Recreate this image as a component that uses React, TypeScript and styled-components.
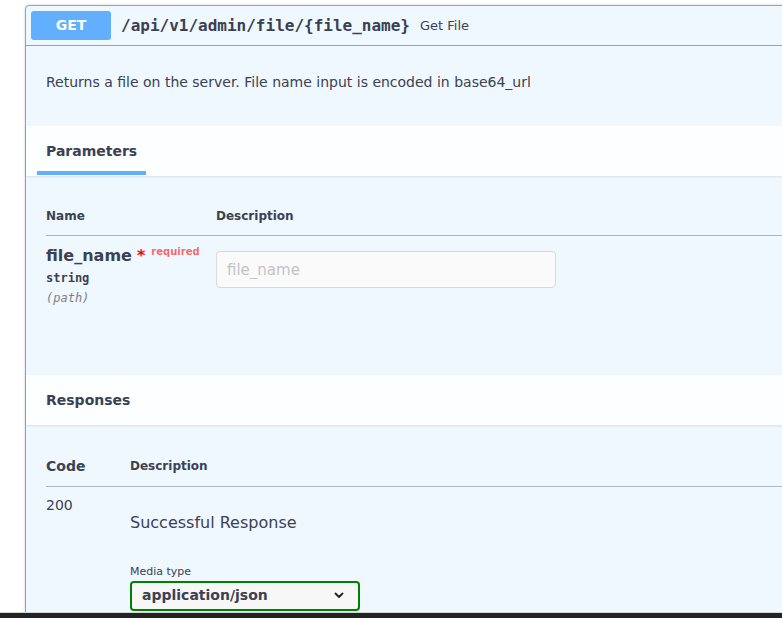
import React from "react";
import styled, { createGlobalStyle } from "styled-components";

const Global = createGlobalStyle`
  html, body { margin: 0; padding: 0; background: #fff; }
  body { font-family: "DejaVu Sans", "Liberation Sans", sans-serif; color: #3b4151; }
  * { box-sizing: border-box; }
`;

const Page = styled.div`
  width: 782px;
  height: 618px;
  overflow: hidden;
  display: flex;
  flex-direction: column;
`;

const Viewport = styled.div`
  flex: 1;
  overflow: hidden;
  padding: 5px 0 0 25px;
`;

const BottomBar = styled.div`
  height: 6px;
  flex: none;
  border-top: 1px solid #d6d6d6;
  background: #232323;
`;

const Card = styled.div`
  width: 820px;
  border: 1px solid #61affe;
  border-radius: 4px;
  background: #eff7ff;
  box-shadow: 0 0 3px rgba(0, 0, 0, 0.19);
`;

const Summary = styled.div`
  display: flex;
  align-items: center;
  padding: 5px;
  border-bottom: 1px solid #61affe;
`;

const Method = styled.span`
  min-width: 80px;
  padding: 6px 0;
  text-align: center;
  background: #61affe;
  color: #fff;
  border-radius: 3px;
  font-size: 14px;
  line-height: 17px;
  font-weight: 700;
  font-family: "DejaVu Sans", sans-serif;
`;

const Path = styled.span`
  padding: 0 10px;
  font-family: "DejaVu Sans Mono", monospace;
  font-weight: 700;
  font-size: 16px;
  color: #3b4151;
`;

const SummaryDesc = styled.span`
  font-size: 13px;
  color: #3b4151;
`;

const Description = styled.div`
  height: 80px;
  padding: 27px 20px 0;
  font-size: 14px;
  line-height: 18px;
  color: #3b4151;
`;

const SectionHeader = styled.div`
  height: 50px;
  display: flex;
  align-items: stretch;
  padding: 0 0 0 11px;
  background: rgba(255, 255, 255, 0.8);
  box-shadow: 0 1px 2px rgba(0, 0, 0, 0.1);
  position: relative;
`;

const TabItem = styled.div<{ $active?: boolean }>`
  display: flex;
  align-items: center;
  padding: 4px 9px 0;
  font-size: 14px;
  font-weight: 700;
  color: #3b4151;
  border-bottom: 4px solid ${(p) => (p.$active ? "#61affe" : "transparent")};
  margin-bottom: 1px;
`;

const ParamsBody = styled.div`
  padding: 21px 0 57px 20px;
`;

const Table = styled.table`
  width: 100%;
  border-collapse: collapse;
`;

const Th = styled.th<{ $w?: number; $size?: number }>`
  text-align: left;
  padding: 12px 0 11px;
  font-size: ${(p) => p.$size ?? 12}px;
  line-height: ${(p) => (p.$size ?? 12) + 3}px;
  font-weight: 700;
  color: #3b4151;
  border-bottom: 1px solid rgba(59, 65, 81, 0.2);
  width: ${(p) => (p.$w ? `${p.$w}px` : "auto")};
`;

const Td = styled.td`
  vertical-align: top;
  padding: 10px 0;
`;

const ParamName = styled.div`
  font-size: 16px;
  line-height: 19px;
  font-weight: 700;
  color: #3b4151;
  white-space: nowrap;
`;

const Star = styled.span`
  color: red;
  font-size: 16px;
  margin-left: 5px;
`;

const Required = styled.span`
  font-size: 10px;
  color: rgba(255, 0, 0, 0.6);
  position: relative;
  top: -4px;
  margin-left: 6px;
  vertical-align: top;
  line-height: 19px;
`;

const ParamType = styled.div`
  font-family: "DejaVu Sans Mono", monospace;
  font-size: 12px;
  font-weight: 600;
  line-height: 20px;
  padding-top: 3px;
  color: #3b4151;
`;

const ParamIn = styled.div`
  font-family: "DejaVu Sans Mono", monospace;
  font-size: 12px;
  font-style: italic;
  line-height: 20px;
  color: gray;
`;

const Input = styled.input`
  display: block;
  width: 340px;
  height: 37px;
  margin: 5px 0;
  padding: 0 10px;
  background: #fafafa;
  border: 1px solid #d9d9d9;
  border-radius: 4px;
  font-family: "DejaVu Sans", sans-serif;
  font-size: 15px;
  color: #3b4151;
  &::placeholder { color: #c4c4c4; }
`;

const ResponsesBody = styled.div`
  padding: 21px 0 0 20px;
`;

const Code = styled.div`
  font-size: 14px;
  line-height: 17px;
  color: #3b4151;
`;

const RespDesc = styled.div`
  font-size: 16px;
  line-height: 19px;
  color: #3b4151;
  margin-top: 16px;
`;

const MediaLabel = styled.div`
  font-size: 11px;
  line-height: 14px;
  color: #3b4151;
  margin-top: 33px;
`;

const Select = styled.div`
  margin-top: 2px;
  width: 230px;
  height: 30px;
  border: 2px solid #008000;
  border-radius: 4px;
  background: #f7f7f7;
  display: flex;
  align-items: center;
  justify-content: space-between;
  padding: 0 14px 2px 10px;
  font-size: 14px;
  font-weight: 700;
  color: #3b4151;
`;

const Chevron = () => (
  <svg width="10" height="7" viewBox="0 0 10 7" fill="none">
    <path d="M1.5 1.5 L5 5 L8.5 1.5" stroke="#222" strokeWidth="1.8" strokeLinecap="round" strokeLinejoin="round" />
  </svg>
);

export default function App() {
  return (
    <Page>
      <Global />
      <Viewport>
        <Card>
          <Summary>
            <Method>GET</Method>
            <Path>/api/v1/admin/file/{"{file_name}"}</Path>
            <SummaryDesc>Get File</SummaryDesc>
          </Summary>
          <Description>
            Returns a file on the server. File name input is encoded in base64_url
          </Description>
          <SectionHeader>
            <TabItem $active>Parameters</TabItem>
          </SectionHeader>
          <ParamsBody>
            <Table>
              <thead>
                <tr>
                  <Th $w={170}>Name</Th>
                  <Th>Description</Th>
                </tr>
              </thead>
              <tbody>
                <tr>
                  <Td>
                    <ParamName>
                      file_name
                      <Star>*</Star>
                      <Required>required</Required>
                    </ParamName>
                    <ParamType>string</ParamType>
                    <ParamIn>(path)</ParamIn>
                  </Td>
                  <Td>
                    <Input placeholder="file_name" />
                  </Td>
                </tr>
              </tbody>
            </Table>
          </ParamsBody>
          <SectionHeader>
            <TabItem>Responses</TabItem>
          </SectionHeader>
          <ResponsesBody>
            <Table>
              <thead>
                <tr>
                  <Th $w={84} $size={14}>Code</Th>
                  <Th>Description</Th>
                </tr>
              </thead>
              <tbody>
                <tr>
                  <Td>
                    <Code>200</Code>
                  </Td>
                  <Td>
                    <RespDesc>Successful Response</RespDesc>
                    <MediaLabel>Media type</MediaLabel>
                    <Select>
                      application/json
                      <Chevron />
                    </Select>
                  </Td>
                </tr>
              </tbody>
            </Table>
          </ResponsesBody>
        </Card>
      </Viewport>
      <BottomBar />
    </Page>
  );
}
